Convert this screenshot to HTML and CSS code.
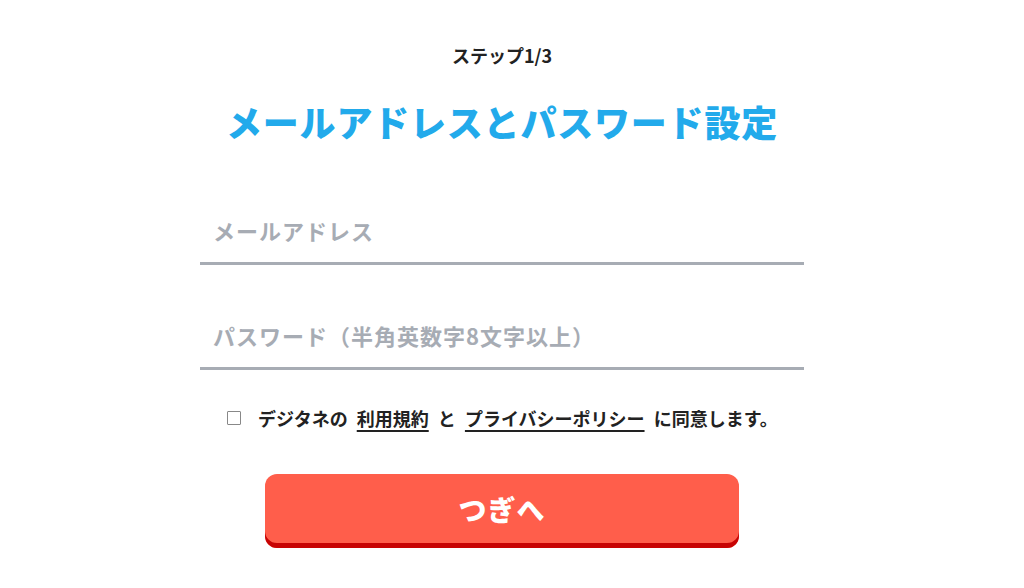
FILE: index.html
```html
<!DOCTYPE html>
<html lang="ja">
<head>
    <meta charset="UTF-8">
    <meta name="viewport" content="width=device-width, initial-scale=1.0">
    <title>メールアドレスとパスワード設定</title>
    <link rel="stylesheet" href="styles.css">
</head>
<body>
    <div class="wrapper">
        <p class="step">ステップ1/3</p>
        <h1 class="title">メールアドレスとパスワード設定</h1>
        <form class="form" onsubmit="return false">
            <div class="field">
                <input type="email" class="field-input" placeholder="メールアドレス">
            </div>
            <div class="field">
                <input type="password" class="field-input" placeholder="パスワード（半角英数字8文字以上）">
            </div>
            <label class="agree">
                <input type="checkbox" class="agree-check">
                <span>デジタネの <a href="#">利用規約</a> と <a href="#">プライバシーポリシー</a> に同意します。</span>
            </label>
            <button type="submit" class="next-btn">つぎへ</button>
        </form>
    </div>
</body>
</html>
```

FILE: styles.css
```css
:root{
    --blue: #22aaeb;
    --red: #ff5e4b;
    --red-dark: #c70404;
    --line: #a7acb4;
    --text: #222;
}
html, body{
    margin: 0;
    padding: 0;
    background: #fff;
    font-family: "Noto Sans CJK JP", "Noto Sans", sans-serif;
    color: var(--text);
}
body{
    padding-right: 20px;
}

.wrapper{
    width: 604px;
    margin: 0 auto;
    padding-top: 40px;
}

.step{
    margin: 0;
    text-align: center;
    font-size: 18px;
    font-weight: 700;
    line-height: 30px;
}

.title{
    margin: 26px 0 0;
    text-align: center;
    font-size: 36px;
    font-weight: 900;
    line-height: 50px;
    letter-spacing: 0.8px;
    color: var(--blue);
}

.form{
    margin-top: 54px;
}

.field{
    margin-bottom: 40px;
}
.field-input{
    display: block;
    width: 100%;
    box-sizing: border-box;
    height: 65px;
    padding: 0 13px 2px;
    border: 0;
    border-bottom: 3px solid var(--line);
    outline: none;
    font-family: inherit;
    font-size: 22px;
    font-weight: 700;
    letter-spacing: 1px;
    color: var(--text);
    background: transparent;
}
.field-input::placeholder{
    color: var(--line);
}

.agree{
    display: flex;
    align-items: center;
    margin: -7px 0 0 27px;
    font-size: 18px;
    font-weight: 700;
    line-height: 30px;
    word-spacing: 5px;
    cursor: pointer;
}
.agree-check{
    appearance: none;
    flex: none;
    width: 14px;
    height: 14px;
    margin: 0 17px 0 0;
    border: 1px solid #888;
    border-radius: 1px;
    background: #fff;
}
.agree a{
    color: var(--text);
    text-decoration: underline;
    text-underline-offset: 4px;
    text-decoration-thickness: 2px;
}

.next-btn{
    display: block;
    width: 474px;
    height: 74px;
    margin: 41px auto 0;
    padding: 0 0 5px;
    border: 0;
    border-radius: 12px;
    background: var(--red);
    box-shadow: inset 0 -5px 0 var(--red-dark);
    font-family: inherit;
    font-size: 28px;
    font-weight: 900;
    letter-spacing: 1px;
    color: #fff;
    cursor: pointer;
}
```
